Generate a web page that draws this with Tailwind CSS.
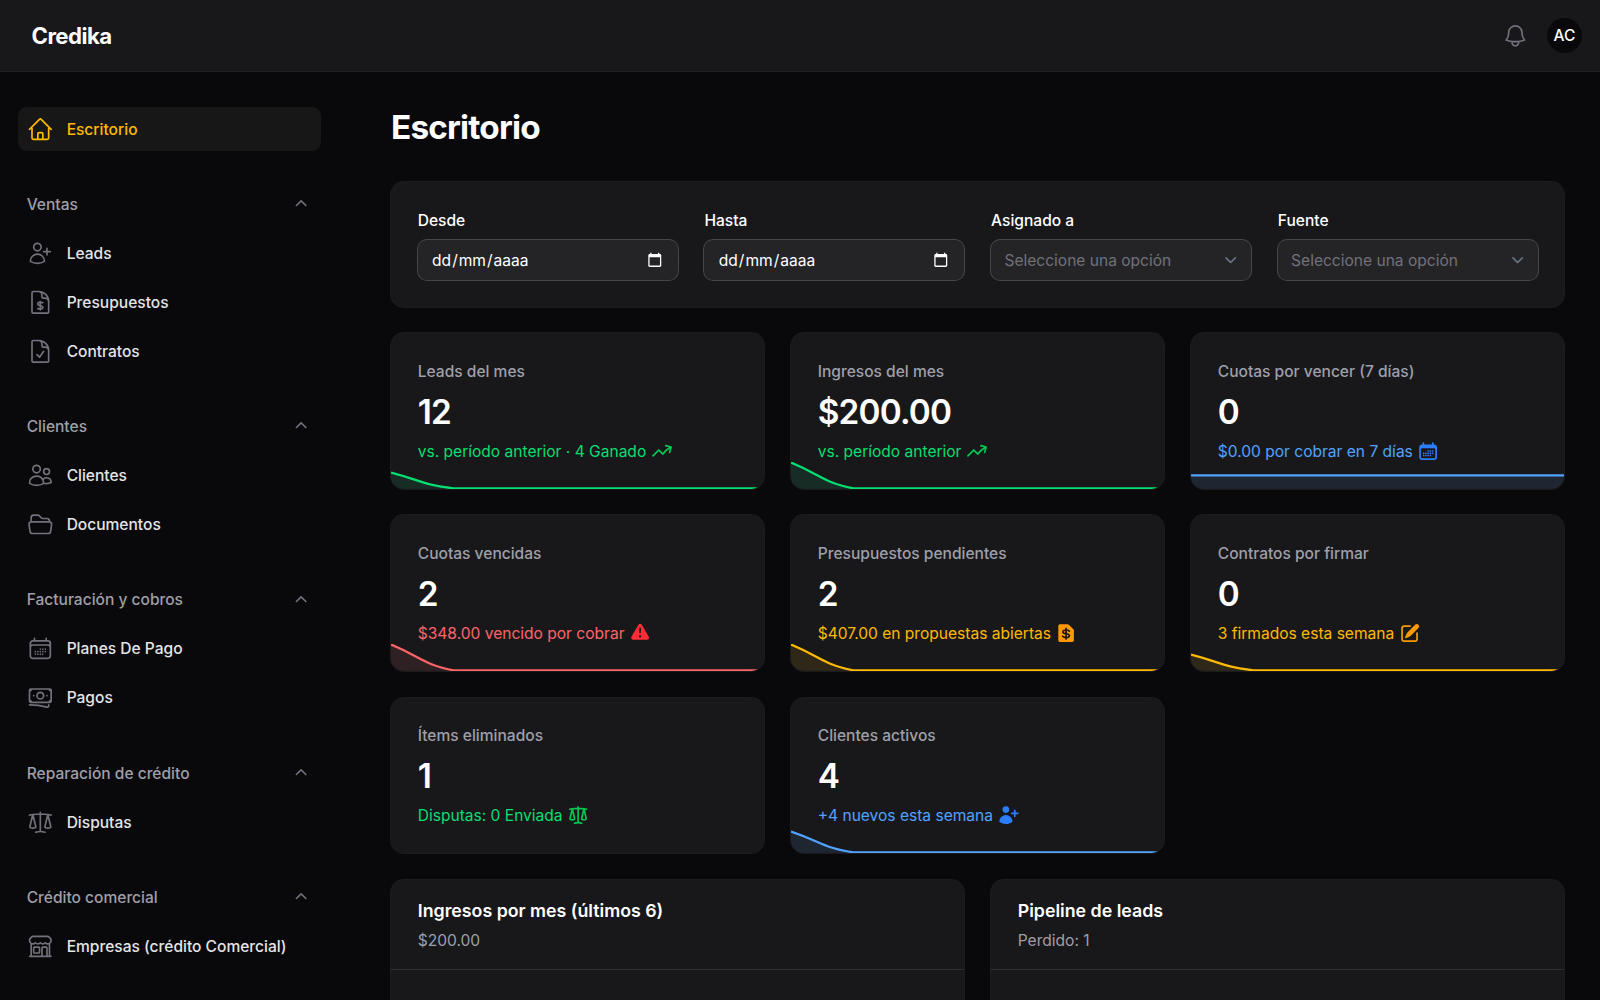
<!DOCTYPE html>
<html lang="es" class="text-[17.7778px]">
<head>
<meta charset="utf-8">
<title>Escritorio - Credika</title>
<script src="https://cdn.jsdelivr.net/npm/@tailwindcss/browser@4"></script>
</head>
<body class="h-screen overflow-hidden bg-zinc-950 font-['Inter',sans-serif] text-sm text-white antialiased">

<!-- Icon sprite -->
<svg class="hidden">
  <symbol id="home" viewBox="0 0 24 24"><path d="m2.25 12 8.954-8.955c.44-.439 1.152-.439 1.591 0L21.75 12M4.5 9.75v10.125c0 .621.504 1.125 1.125 1.125H9.75v-4.875c0-.621.504-1.125 1.125-1.125h2.25c.621 0 1.125.504 1.125 1.125V21h4.125c.621 0 1.125-.504 1.125-1.125V9.75M8.25 21h8.25"/></symbol>
  <symbol id="user-plus" viewBox="0 0 24 24"><path d="M18 7.5v3m0 0v3m0-3h3m-3 0h-3m-2.25-4.125a3.375 3.375 0 1 1-6.75 0 3.375 3.375 0 0 1 6.75 0ZM3 19.235v-.11a6.375 6.375 0 0 1 12.75 0v.109A12.318 12.318 0 0 1 9.374 21c-2.331 0-4.512-.645-6.374-1.766Z"/></symbol>
  <symbol id="doc-dollar" viewBox="0 0 24 24"><path d="M19.5 14.25v-2.625a3.375 3.375 0 0 0-3.375-3.375h-1.5A1.125 1.125 0 0 1 13.5 7.125v-1.5a3.375 3.375 0 0 0-3.375-3.375H8.25m3.75 9v7.5m2.25-6.466a9.016 9.016 0 0 0-3.461-.203c-.536.072-.974.478-1.021 1.017a4.559 4.559 0 0 0-.018.402c0 .464.336.844.775.994l2.95 1.012c.44.15.775.53.775.994 0 .136-.006.27-.018.402-.047.539-.485.945-1.021 1.017a9.077 9.077 0 0 1-3.461-.203M10.5 2.25H5.625c-.621 0-1.125.504-1.125 1.125v17.25c0 .621.504 1.125 1.125 1.125h12.75c.621 0 1.125-.504 1.125-1.125V11.25a9 9 0 0 0-9-9Z"/></symbol>
  <symbol id="doc-check" viewBox="0 0 24 24"><path d="M10.125 2.25h-4.5c-.621 0-1.125.504-1.125 1.125v17.25c0 .621.504 1.125 1.125 1.125h12.75c.621 0 1.125-.504 1.125-1.125v-9M10.125 2.25h.375a9 9 0 0 1 9 9v.375M10.125 2.25A3.375 3.375 0 0 1 13.5 5.625v1.5c0 .621.504 1.125 1.125 1.125h1.5a3.375 3.375 0 0 1 3.375 3.375M9 15l2.25 2.25L15 12"/></symbol>
  <symbol id="users" viewBox="0 0 24 24"><path d="M15 19.128a9.38 9.38 0 0 0 2.625.372 9.337 9.337 0 0 0 4.121-.952 4.125 4.125 0 0 0-7.533-2.493M15 19.128v-.003c0-1.113-.285-2.16-.786-3.07M15 19.128v.106A12.318 12.318 0 0 1 8.624 21c-2.331 0-4.512-.645-6.374-1.766l-.001-.109a6.375 6.375 0 0 1 11.964-3.07M12 6.375a3.375 3.375 0 1 1-6.75 0 3.375 3.375 0 0 1 6.75 0Zm8.25 2.25a2.625 2.625 0 1 1-5.25 0 2.625 2.625 0 0 1 5.25 0Z"/></symbol>
  <symbol id="folder" viewBox="0 0 24 24"><path d="M3.75 9.776c.112-.017.227-.026.344-.026h15.812c.117 0 .232.009.344.026m-16.5 0a2.25 2.25 0 0 0-1.883 2.542l.857 6a2.25 2.25 0 0 0 2.227 1.932H19.05a2.25 2.25 0 0 0 2.227-1.932l.857-6a2.25 2.25 0 0 0-1.883-2.542m-16.5 0V6A2.25 2.25 0 0 1 6 3.75h3.879a1.5 1.5 0 0 1 1.06.44l2.122 2.12a1.5 1.5 0 0 0 1.06.44H18A2.25 2.25 0 0 1 20.25 9v.776"/></symbol>
  <symbol id="calendar" viewBox="0 0 24 24"><path d="M6.75 3v2.25M17.25 3v2.25M3 18.75V7.5a2.25 2.25 0 0 1 2.25-2.25h13.5A2.25 2.25 0 0 1 21 7.5v11.25m-18 0A2.25 2.25 0 0 0 5.25 21h13.5A2.25 2.25 0 0 0 21 18.75m-18 0v-7.5A2.25 2.25 0 0 1 5.25 9h13.5A2.25 2.25 0 0 1 21 11.25v7.5m-9-6h.008v.008H12v-.008ZM12 15h.008v.008H12V15Zm0 2.25h.008v.008H12v-.008ZM9.75 15h.008v.008H9.75V15Zm0 2.25h.008v.008H9.75v-.008ZM7.5 15h.008v.008H7.5V15Zm0 2.25h.008v.008H7.5v-.008Zm6.75-4.5h.008v.008h-.008v-.008Zm0 2.25h.008v.008h-.008V15Zm0 2.25h.008v.008h-.008v-.008Zm2.25-4.5h.008v.008H16.5v-.008Zm0 2.25h.008v.008H16.5V15Z"/></symbol>
  <symbol id="banknotes" viewBox="0 0 24 24"><path d="M2.25 18.75a60.07 60.07 0 0 1 15.797 2.101c.727.198 1.453-.342 1.453-1.096V18.75M3.75 4.5v.75A.75.75 0 0 1 3 6h-.75m0 0v-.375c0-.621.504-1.125 1.125-1.125H20.25M2.25 6v9m18-10.5v.75c0 .414.336.75.75.75h.75m-1.5-1.5h.375c.621 0 1.125.504 1.125 1.125v9.75c0 .621-.504 1.125-1.125 1.125h-.375m1.5-1.5H21a.75.75 0 0 0-.75.75v.75m0 0H3.75m0 0h-.375a1.125 1.125 0 0 1-1.125-1.125V15m1.5 1.5v-.75A.75.75 0 0 0 3 15h-.75M15 10.5a3 3 0 1 1-6 0 3 3 0 0 1 6 0Zm3 0h.008v.008H18V10.5Zm-12 0h.008v.008H6V10.5Z"/></symbol>
  <symbol id="scale" viewBox="0 0 24 24"><path d="M12 3v17.25m0 0c-1.472 0-2.882.265-4.185.75M12 20.25c1.472 0 2.882.265 4.185.75M18.75 4.97A48.416 48.416 0 0 0 12 4.5c-2.291 0-4.545.16-6.75.47m13.5 0c1.01.143 2.01.317 3 .52m-3-.52 2.62 10.726c.122.499-.106 1.028-.589 1.202a5.988 5.988 0 0 1-2.031.352 5.988 5.988 0 0 1-2.031-.352c-.483-.174-.711-.703-.59-1.202L18.75 4.971Zm-16.5.52c.99-.203 1.99-.377 3-.52m0 0 2.62 10.726c.122.499-.106 1.028-.589 1.202a5.989 5.989 0 0 1-2.031.352 5.989 5.989 0 0 1-2.031-.352c-.483-.174-.711-.703-.59-1.202L5.25 4.971Z"/></symbol>
  <symbol id="store" viewBox="0 0 24 24"><path d="M13.5 21v-7.5a.75.75 0 0 1 .75-.75h3a.75.75 0 0 1 .75.75V21m-4.5 0H2.36m11.14 0H18m0 0h3.64m-1.39 0V9.349M3.75 21V9.349m0 0a3.001 3.001 0 0 0 3.75-.615A2.993 2.993 0 0 0 9.75 9.75c.896 0 1.7-.393 2.25-1.016a2.993 2.993 0 0 0 2.25 1.016c.896 0 1.7-.393 2.25-1.015a3.001 3.001 0 0 0 3.75.614m-16.5 0a3.004 3.004 0 0 1-.621-4.72l1.189-1.19A1.5 1.5 0 0 1 5.378 3h13.243a1.5 1.5 0 0 1 1.06.44l1.19 1.189a3 3 0 0 1-.621 4.72M6.75 18h3.75a.75.75 0 0 0 .75-.75V13.5a.75.75 0 0 0-.75-.75H6.75a.75.75 0 0 0-.75.75v3.75c0 .414.336.75.75.75Z"/></symbol>
  <symbol id="bell" viewBox="0 0 24 24"><path d="M14.857 17.082a23.848 23.848 0 0 0 5.454-1.31A8.967 8.967 0 0 1 18 9.75V9A6 6 0 0 0 6 9v.75a8.967 8.967 0 0 1-2.312 6.022c1.733.64 3.56 1.085 5.455 1.31m5.714 0a24.255 24.255 0 0 1-5.714 0m5.714 0a3 3 0 1 1-5.714 0"/></symbol>
  <symbol id="chevron-up" viewBox="0 0 20 20"><path d="M9.47 6.47a.75.75 0 0 1 1.06 0l4.25 4.25a.75.75 0 1 1-1.06 1.06L10 8.06l-3.72 3.72a.75.75 0 0 1-1.06-1.06l4.25-4.25Z"/></symbol>
  <symbol id="chevron-down" viewBox="0 0 20 20"><path d="m6 8 4 4 4-4"/></symbol>
  <symbol id="date-picker" viewBox="0 0 24 24"><path d="M20 3h-1V1h-2v2H7V1H5v2H4c-1.1 0-2 .9-2 2v16c0 1.1.9 2 2 2h16c1.1 0 2-.9 2-2V5c0-1.1-.9-2-2-2zm0 18H4V8h16v13z"/></symbol>
  <symbol id="m-trend" viewBox="0 0 20 20"><path d="M12.577 4.878a.75.75 0 0 1 .919-.53l4.78 1.281a.75.75 0 0 1 .531.919l-1.281 4.78a.75.75 0 0 1-1.449-.387l.81-3.022a19.407 19.407 0 0 0-5.594 5.203.75.75 0 0 1-1.139.093L7 10.06l-4.72 4.72a.75.75 0 0 1-1.06-1.061l5.25-5.25a.75.75 0 0 1 1.06 0l3.074 3.073a20.923 20.923 0 0 1 5.545-4.931l-3.042-.815a.75.75 0 0 1-.53-.919Z"/></symbol>
  <symbol id="m-calendar" viewBox="0 0 20 20"><path fill-rule="evenodd" d="M5.75 2a.75.75 0 0 1 .75.75V4h7V2.75a.75.75 0 0 1 1.5 0V4h.25A2.75 2.75 0 0 1 18 6.75v8.5A2.75 2.75 0 0 1 15.25 18H4.75A2.75 2.75 0 0 1 2 15.25v-8.5A2.75 2.75 0 0 1 4.75 4H5V2.75A.75.75 0 0 1 5.75 2Zm-1 5.5c-.69 0-1.25.56-1.25 1.25v6.5c0 .69.56 1.25 1.25 1.25h10.5c.69 0 1.25-.56 1.25-1.25v-6.5c0-.69-.56-1.25-1.25-1.25H4.75Z"/><path fill="none" stroke="currentColor" stroke-width="1.5" stroke-linecap="round" d="M10 10h.01M12 10h.01M14 10h.01M6 12h.01M8 12h.01M10 12h.01M12 12h.01M14 12h.01M6 14h.01M8 14h.01M10 14h.01M12 14h.01"/></symbol>
  <symbol id="m-warning" viewBox="0 0 20 20"><path fill-rule="evenodd" d="M8.485 2.495c.673-1.167 2.357-1.167 3.03 0l6.28 10.875c.673 1.167-.17 2.625-1.516 2.625H3.72c-1.347 0-2.189-1.458-1.515-2.625L8.485 2.495ZM10 5a.75.75 0 0 1 .75.75v3.5a.75.75 0 0 1-1.5 0v-3.5A.75.75 0 0 1 10 5Zm0 9a1 1 0 1 0 0-2 1 1 0 0 0 0 2Z"/></symbol>
  <symbol id="m-doc-dollar" viewBox="0 0 20 20"><path d="M4.5 2A1.5 1.5 0 0 0 3 3.5v13A1.5 1.5 0 0 0 4.5 18h11a1.5 1.5 0 0 0 1.5-1.5V7.621a1.5 1.5 0 0 0-.44-1.06l-4.12-4.122A1.5 1.5 0 0 0 11.378 2H4.5Z"/><path fill="none" stroke="#18181b" stroke-width="1.5" stroke-linecap="round" stroke-linejoin="round" d="M10 5.8v9.4M12.9 8.2C12.1 7.5 11.1 7.2 10 7.2c-1.700 0-2.900.7-2.900 1.700 0 2.500 5.900.8 5.900 3.300 0 1.100-1.300 1.800-3 1.800-1.300 0-2.400-.4-3.100-1.200"/></symbol>
  <symbol id="m-pencil" viewBox="0 0 20 20"><path d="m5.433 13.917 1.262-3.155A4 4 0 0 1 7.58 9.42l6.92-6.918a2.121 2.121 0 0 1 3 3l-6.92 6.918c-.383.383-.84.685-1.343.886l-3.154 1.262a.5.5 0 0 1-.65-.65Z"/><path d="M3.5 5.75c0-.69.56-1.25 1.25-1.25H10A.75.75 0 0 0 10 3H4.75A2.75 2.75 0 0 0 2 5.75v9.5A2.75 2.75 0 0 0 4.75 18h9.5A2.75 2.75 0 0 0 17 15.25V10a.75.75 0 0 0-1.5 0v5.25c0 .69-.56 1.25-1.25 1.25h-9.5c-.69 0-1.25-.56-1.25-1.25v-9.5Z"/></symbol>
  <symbol id="m-scale" viewBox="-0.9 -0.3 25.8 24.6" preserveAspectRatio="none"><use href="#scale" width="24" height="24" fill="none" stroke="currentColor" stroke-width="1.9" stroke-linecap="round" stroke-linejoin="round"/></symbol>
  <symbol id="m-user-plus" viewBox="0 0 20 20"><path d="M11 5a3 3 0 1 1-6 0 3 3 0 0 1 6 0ZM2.046 15.253c-.058.468.172.92.57 1.175A9.953 9.953 0 0 0 8 18c1.982 0 3.83-.578 5.384-1.573.398-.254.628-.707.57-1.175a6.001 6.001 0 0 0-11.908 0ZM16.75 5.75a.75.75 0 0 0-1.5 0v2h-2a.75.75 0 0 0 0 1.5h2v2a.75.75 0 0 0 1.5 0v-2h2a.75.75 0 0 0 0-1.5h-2v-2Z"/></symbol>
</svg>

<div class="flex h-full flex-col">
  <header class="relative z-10 flex h-16 shrink-0 items-center justify-between bg-zinc-900 pl-[31.5px] pr-4 ring-1 ring-white/10">
    <span class="translate-y-px text-xl font-bold leading-5 tracking-tight">Credika</span>
    <div class="flex items-center gap-4">
      <svg class="size-6 translate-y-[0.5px] fill-none stroke-zinc-500 stroke-[1.5] [stroke-linecap:round] [stroke-linejoin:round]"><use href="#bell"/></svg>
      <span class="flex size-8 items-center justify-center rounded-full bg-zinc-950 font-medium"><span class="translate-y-px">AC</span></span>
    </div>
  </header>

  <div class="flex min-h-0 flex-1">
    <aside class="w-80 shrink-0 overflow-hidden py-8 pl-4 font-medium">
      <nav class="flex w-[303px] flex-col gap-7">
        <a class="flex items-center gap-3 rounded-lg bg-[#171717] p-2 leading-6 text-amber-400"><svg class="size-6 fill-none stroke-current stroke-[1.5] [stroke-linecap:round] [stroke-linejoin:round]"><use href="#home"/></svg><span class="translate-y-px">Escritorio</span></a>

        <div class="flex flex-col gap-1">
          <div class="flex items-center justify-between p-2 leading-6 text-zinc-400"><span class="translate-y-px">Ventas</span><svg class="size-5 fill-zinc-500"><use href="#chevron-up"/></svg></div>
          <a class="flex items-center gap-3 p-2 leading-6 text-zinc-200"><svg class="size-6 fill-none stroke-zinc-500 stroke-[1.5] [stroke-linecap:round] [stroke-linejoin:round]"><use href="#user-plus"/></svg><span class="translate-y-px">Leads</span></a>
          <a class="flex items-center gap-3 p-2 leading-6 text-zinc-200"><svg class="size-6 fill-none stroke-zinc-500 stroke-[1.5] [stroke-linecap:round] [stroke-linejoin:round]"><use href="#doc-dollar"/></svg><span class="translate-y-px">Presupuestos</span></a>
          <a class="flex items-center gap-3 p-2 leading-6 text-zinc-200"><svg class="size-6 fill-none stroke-zinc-500 stroke-[1.5] [stroke-linecap:round] [stroke-linejoin:round]"><use href="#doc-check"/></svg><span class="translate-y-px">Contratos</span></a>
        </div>

        <div class="flex flex-col gap-1">
          <div class="flex items-center justify-between p-2 leading-6 text-zinc-400"><span class="translate-y-px">Clientes</span><svg class="size-5 fill-zinc-500"><use href="#chevron-up"/></svg></div>
          <a class="flex items-center gap-3 p-2 leading-6 text-zinc-200"><svg class="size-6 fill-none stroke-zinc-500 stroke-[1.5] [stroke-linecap:round] [stroke-linejoin:round]"><use href="#users"/></svg><span class="translate-y-px">Clientes</span></a>
          <a class="flex items-center gap-3 p-2 leading-6 text-zinc-200"><svg class="size-6 fill-none stroke-zinc-500 stroke-[1.5] [stroke-linecap:round] [stroke-linejoin:round]"><use href="#folder"/></svg><span class="translate-y-px">Documentos</span></a>
        </div>

        <div class="flex flex-col gap-1">
          <div class="flex items-center justify-between p-2 leading-6 text-zinc-400"><span class="translate-y-px">Facturación y cobros</span><svg class="size-5 fill-zinc-500"><use href="#chevron-up"/></svg></div>
          <a class="flex items-center gap-3 p-2 leading-6 text-zinc-200"><svg class="size-6 fill-none stroke-zinc-500 stroke-[1.5] [stroke-linecap:round] [stroke-linejoin:round]"><use href="#calendar"/></svg><span class="translate-y-px">Planes De Pago</span></a>
          <a class="flex items-center gap-3 p-2 leading-6 text-zinc-200"><svg class="size-6 fill-none stroke-zinc-500 stroke-[1.5] [stroke-linecap:round] [stroke-linejoin:round]"><use href="#banknotes"/></svg><span class="translate-y-px">Pagos</span></a>
        </div>

        <div class="flex flex-col gap-1">
          <div class="flex items-center justify-between p-2 leading-6 text-zinc-400"><span class="translate-y-px">Reparación de crédito</span><svg class="size-5 fill-zinc-500"><use href="#chevron-up"/></svg></div>
          <a class="flex items-center gap-3 p-2 leading-6 text-zinc-200"><svg class="size-6 fill-none stroke-zinc-500 stroke-[1.5] [stroke-linecap:round] [stroke-linejoin:round]"><use href="#scale"/></svg><span class="translate-y-px">Disputas</span></a>
        </div>

        <div class="flex flex-col gap-1">
          <div class="flex items-center justify-between p-2 leading-6 text-zinc-400"><span class="translate-y-px">Crédito comercial</span><svg class="size-5 fill-zinc-500"><use href="#chevron-up"/></svg></div>
          <a class="flex items-center gap-3 p-2 leading-6 text-zinc-200"><svg class="size-6 fill-none stroke-zinc-500 stroke-[1.5] [stroke-linecap:round] [stroke-linejoin:round]"><use href="#store"/></svg><span class="translate-y-px">Empresas (crédito Comercial)</span></a>
        </div>
      </nav>
    </aside>

    <main class="min-w-0 flex-1 overflow-hidden px-8 pt-8">
      <h1 class="text-3xl font-bold leading-9 tracking-tight">Escritorio</h1>

      <!-- Filters -->
      <section class="mt-8 grid grid-cols-4 gap-6 rounded-xl bg-zinc-900 p-6 ring-1 ring-white/8">
        <div class="flex flex-col gap-2">
          <label class="translate-y-px font-medium leading-5">Desde</label>
          <div class="flex h-9 items-center justify-between rounded-lg bg-white/5 px-3 ring-1 ring-white/20"><span class="flex translate-y-px"><span class="px-px">dd</span>/<span class="px-px">mm</span>/<span class="px-px">aaaa</span></span><svg class="mr-0.5 size-3.5 fill-white"><use href="#date-picker"/></svg></div>
        </div>
        <div class="flex flex-col gap-2">
          <label class="translate-y-px font-medium leading-5">Hasta</label>
          <div class="flex h-9 items-center justify-between rounded-lg bg-white/5 px-3 ring-1 ring-white/20"><span class="flex translate-y-px"><span class="px-px">dd</span>/<span class="px-px">mm</span>/<span class="px-px">aaaa</span></span><svg class="mr-0.5 size-3.5 fill-white"><use href="#date-picker"/></svg></div>
        </div>
        <div class="flex flex-col gap-2">
          <label class="translate-y-px font-medium leading-5">Asignado a</label>
          <div class="flex h-9 items-center justify-between rounded-lg bg-white/5 pl-3 pr-2 text-zinc-500 ring-1 ring-white/20"><span class="translate-y-px">Seleccione una opción</span><svg class="size-[1.5em] translate-y-[0.5px] fill-none stroke-gray-500 stroke-[1.5] [stroke-linecap:round] [stroke-linejoin:round]"><use href="#chevron-down"/></svg></div>
        </div>
        <div class="flex flex-col gap-2">
          <label class="translate-y-px font-medium leading-5">Fuente</label>
          <div class="flex h-9 items-center justify-between rounded-lg bg-white/5 pl-3 pr-2 text-zinc-500 ring-1 ring-white/20"><span class="translate-y-px">Seleccione una opción</span><svg class="size-[1.5em] translate-y-[0.5px] fill-none stroke-gray-500 stroke-[1.5] [stroke-linecap:round] [stroke-linejoin:round]"><use href="#chevron-down"/></svg></div>
        </div>
      </section>

      <!-- Stats -->
      <section class="mt-6 grid grid-cols-3 gap-6">
        <div class="relative rounded-xl bg-zinc-900 p-6 ring-1 ring-white/8">
          <div class="translate-y-px font-medium leading-5 text-zinc-400">Leads del mes</div>
          <div class="mt-2 translate-y-[0.5px] text-3xl font-semibold leading-9 tracking-tight">12</div>
          <div class="mt-2 flex h-5 items-center gap-1 text-green-400"><span class="translate-y-px">vs. período anterior · 4 Ganado</span><svg class="size-5 fill-green-500"><use href="#m-trend"/></svg></div>
          <div class="absolute inset-x-0 bottom-0 overflow-hidden rounded-b-xl"><svg class="h-6 w-full" viewBox="0 0 336 24"><path class="fill-green-400/10" d="M0 9.5C28 16.75 28 20.4 56 24H0Z"/><path class="fill-none stroke-green-400 stroke-2" d="M0 9.5C28 16.75 28 20.4 56 23.7H336"/></svg></div>
        </div>
        <div class="relative rounded-xl bg-zinc-900 p-6 ring-1 ring-white/8">
          <div class="translate-y-px font-medium leading-5 text-zinc-400">Ingresos del mes</div>
          <div class="mt-2 translate-y-[0.5px] text-3xl font-semibold leading-9 tracking-tight">$200.00</div>
          <div class="mt-2 flex h-5 items-center gap-1 text-green-400"><span class="translate-y-px">vs. período anterior</span><svg class="size-5 fill-green-500"><use href="#m-trend"/></svg></div>
          <div class="absolute inset-x-0 bottom-0 overflow-hidden rounded-b-xl"><svg class="h-6 w-full" viewBox="0 0 336 24"><path class="fill-green-400/10" d="M0 .5C28 12 28 18 56 24H0Z"/><path class="fill-none stroke-green-400 stroke-2" d="M0 .5C28 12 28 18 56 23.7H336"/></svg></div>
        </div>
        <div class="relative rounded-xl bg-zinc-900 p-6 ring-1 ring-white/8">
          <div class="translate-y-px font-medium leading-5 text-zinc-400">Cuotas por vencer (7 días)</div>
          <div class="mt-2 translate-y-[0.5px] text-3xl font-semibold leading-9 tracking-tight">0</div>
          <div class="mt-2 flex h-5 items-center gap-1 text-blue-400"><span class="translate-y-px">$0.00 por cobrar en 7 días</span><svg class="size-5 fill-blue-500 text-blue-500"><use href="#m-calendar"/></svg></div>
          <div class="absolute inset-x-0 bottom-0 overflow-hidden rounded-b-xl"><svg class="h-6 w-full" viewBox="0 0 336 24"><path class="fill-blue-400/10" d="M0 12H336V24H0Z"/><path class="fill-none stroke-blue-400 stroke-2" d="M0 12H336"/></svg></div>
        </div>

        <div class="relative rounded-xl bg-zinc-900 p-6 ring-1 ring-white/8">
          <div class="translate-y-px font-medium leading-5 text-zinc-400">Cuotas vencidas</div>
          <div class="mt-2 translate-y-[0.5px] text-3xl font-semibold leading-9 tracking-tight">2</div>
          <div class="mt-2 flex h-5 items-center gap-1 text-red-400"><span class="translate-y-px">$348.00 vencido por cobrar</span><svg class="size-5 fill-red-500"><use href="#m-warning"/></svg></div>
          <div class="absolute inset-x-0 bottom-0 overflow-hidden rounded-b-xl"><svg class="h-6 w-full" viewBox="0 0 336 24"><path class="fill-red-400/10" d="M0 .5C28 12 28 18 56 24H0Z"/><path class="fill-none stroke-red-400 stroke-2" d="M0 .5C28 12 28 18 56 23.7H336"/></svg></div>
        </div>
        <div class="relative rounded-xl bg-zinc-900 p-6 ring-1 ring-white/8">
          <div class="translate-y-px font-medium leading-5 text-zinc-400">Presupuestos pendientes</div>
          <div class="mt-2 translate-y-[0.5px] text-3xl font-semibold leading-9 tracking-tight">2</div>
          <div class="mt-2 flex h-5 items-center gap-1 text-amber-400"><span class="translate-y-px">$407.00 en propuestas abiertas</span><svg class="size-5 fill-amber-500"><use href="#m-doc-dollar"/></svg></div>
          <div class="absolute inset-x-0 bottom-0 overflow-hidden rounded-b-xl"><svg class="h-6 w-full" viewBox="0 0 336 24"><path class="fill-amber-400/10" d="M0 .5C28 12 28 18 56 24H0Z"/><path class="fill-none stroke-amber-400 stroke-2" d="M0 .5C28 12 28 18 56 23.7H336"/></svg></div>
        </div>
        <div class="relative rounded-xl bg-zinc-900 p-6 ring-1 ring-white/8">
          <div class="translate-y-px font-medium leading-5 text-zinc-400">Contratos por firmar</div>
          <div class="mt-2 translate-y-[0.5px] text-3xl font-semibold leading-9 tracking-tight">0</div>
          <div class="mt-2 flex h-5 items-center gap-1 text-amber-400"><span class="translate-y-px">3 firmados esta semana</span><svg class="size-5 fill-amber-500"><use href="#m-pencil"/></svg></div>
          <div class="absolute inset-x-0 bottom-0 overflow-hidden rounded-b-xl"><svg class="h-6 w-full" viewBox="0 0 336 24"><path class="fill-amber-400/10" d="M0 9.5C28 16.75 28 20.4 56 24H0Z"/><path class="fill-none stroke-amber-400 stroke-2" d="M0 9.5C28 16.75 28 20.4 56 23.7H336"/></svg></div>
        </div>

        <div class="relative rounded-xl bg-zinc-900 p-6 ring-1 ring-white/8">
          <div class="translate-y-px font-medium leading-5 text-zinc-400">Ítems eliminados</div>
          <div class="mt-2 translate-y-px text-3xl font-semibold leading-9 tracking-tight">1</div>
          <div class="mt-2 flex h-5 items-center gap-1 text-green-400"><span class="translate-y-px">Disputas: 0 Enviada</span><svg class="size-5 text-green-500"><use href="#m-scale"/></svg></div>
        </div>
        <div class="relative rounded-xl bg-zinc-900 p-6 ring-1 ring-white/8">
          <div class="translate-y-px font-medium leading-5 text-zinc-400">Clientes activos</div>
          <div class="mt-2 translate-y-px text-3xl font-semibold leading-9 tracking-tight">4</div>
          <div class="mt-2 flex h-5 items-center gap-1 text-blue-400"><span class="translate-y-px">+4 nuevos esta semana</span><svg class="size-5 fill-blue-500"><use href="#m-user-plus"/></svg></div>
          <div class="absolute inset-x-0 bottom-0 overflow-hidden rounded-b-xl"><svg class="h-6 w-full" viewBox="0 0 336 24"><path class="fill-blue-400/10" d="M0 5C28 14.5 28 19.25 56 24H0Z"/><path class="fill-none stroke-blue-400 stroke-2" d="M0 5C28 14.5 28 19.25 56 23.7H336"/></svg></div>
        </div>
      </section>

      <!-- Charts -->
      <section class="mt-6 grid grid-cols-2 gap-6">
        <div class="h-80 rounded-xl bg-zinc-900 ring-1 ring-white/8">
          <div class="flex flex-col gap-1 border-b border-white/10 px-6 py-4">
            <h2 class="text-base font-semibold leading-6">Ingresos por mes (últimos 6)</h2>
            <p class="translate-y-px leading-5 text-zinc-400">$200.00</p>
          </div>
        </div>
        <div class="h-80 rounded-xl bg-zinc-900 ring-1 ring-white/8">
          <div class="flex flex-col gap-1 border-b border-white/10 px-6 py-4">
            <h2 class="text-base font-semibold leading-6">Pipeline de leads</h2>
            <p class="translate-y-px leading-5 text-zinc-400">Perdido: 1</p>
          </div>
        </div>
      </section>
    </main>
  </div>
</div>
</body>
</html>
